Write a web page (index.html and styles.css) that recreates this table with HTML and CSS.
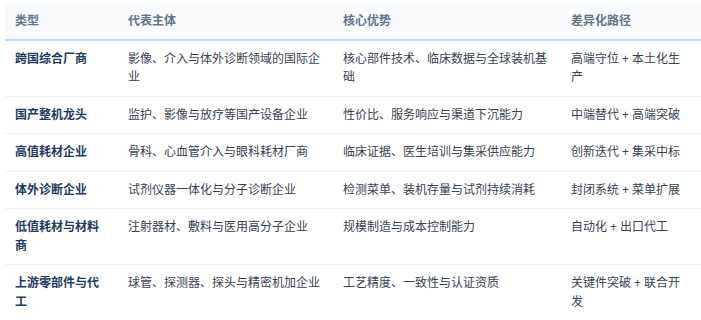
FILE: index.html
```html
<!DOCTYPE html>
<html lang="zh-CN">
<head>
<meta charset="utf-8">
<link rel="stylesheet" href="styles.css">
</head>
<body>
<div class="wrap">
<table class="matrix">
  <colgroup>
    <col class="c1"><col class="c2"><col class="c3"><col class="c4">
  </colgroup>
  <thead>
    <tr><th>类型</th><th>代表主体</th><th>核心优势</th><th>差异化路径</th></tr>
  </thead>
  <tbody>
    <tr><td class="type">跨国综合厂商</td><td>影像、介入与体外诊断领域的国际企业</td><td>核心部件技术、临床数据与全球装机基础</td><td>高端守位 + 本土化生产</td></tr>
    <tr><td class="type">国产整机龙头</td><td>监护、影像与放疗等国产设备企业</td><td>性价比、服务响应与渠道下沉能力</td><td>中端替代 + 高端突破</td></tr>
    <tr><td class="type">高值耗材企业</td><td>骨科、心血管介入与眼科耗材厂商</td><td>临床证据、医生培训与集采供应能力</td><td>创新迭代 + 集采中标</td></tr>
    <tr><td class="type">体外诊断企业</td><td>试剂仪器一体化与分子诊断企业</td><td>检测菜单、装机存量与试剂持续消耗</td><td>封闭系统 + 菜单扩展</td></tr>
    <tr><td class="type">低值耗材与材料商</td><td>注射器材、敷料与医用高分子企业</td><td>规模制造与成本控制能力</td><td>自动化 + 出口代工</td></tr>
    <tr><td class="type">上游零部件与代工</td><td>球管、探测器、探头与精密机加企业</td><td>工艺精度、一致性与认证资质</td><td>关键件突破 + 联合开发</td></tr>
  </tbody>
</table>
</div>
</body>
</html>
```
FILE: styles.css
```css
html, body {
  margin: 0;
  padding: 0;
  background: #ffffff;
  overflow: hidden;
}
.wrap {
  padding: 3px 0 0 5px;
}
.matrix {
  width: 696px;
  table-layout: fixed;
  border-collapse: collapse;
  font-family: "Noto Sans", "Noto Sans CJK SC", sans-serif;
  font-size: 12px;
  line-height: 18.5px;
  color: #374151;
}
.c1 { width: 113px; }
.c2 { width: 215px; }
.c3 { width: 228px; }
.c4 { width: 140px; }
.matrix th {
  text-align: left;
  font-weight: 600;
  color: #64748b;
  background: #f8fafc;
  padding: 8.5px 10px;
  border-bottom: 2px solid #bfdbfe;
}
.matrix td {
  vertical-align: top;
  padding: 9px 10px;
  border-bottom: 1px solid #eef1f4;
}
.matrix tbody tr:last-child td {
  border-bottom: none;
}
.matrix td.type {
  font-weight: 700;
  color: #1e3a5f;
}
```
